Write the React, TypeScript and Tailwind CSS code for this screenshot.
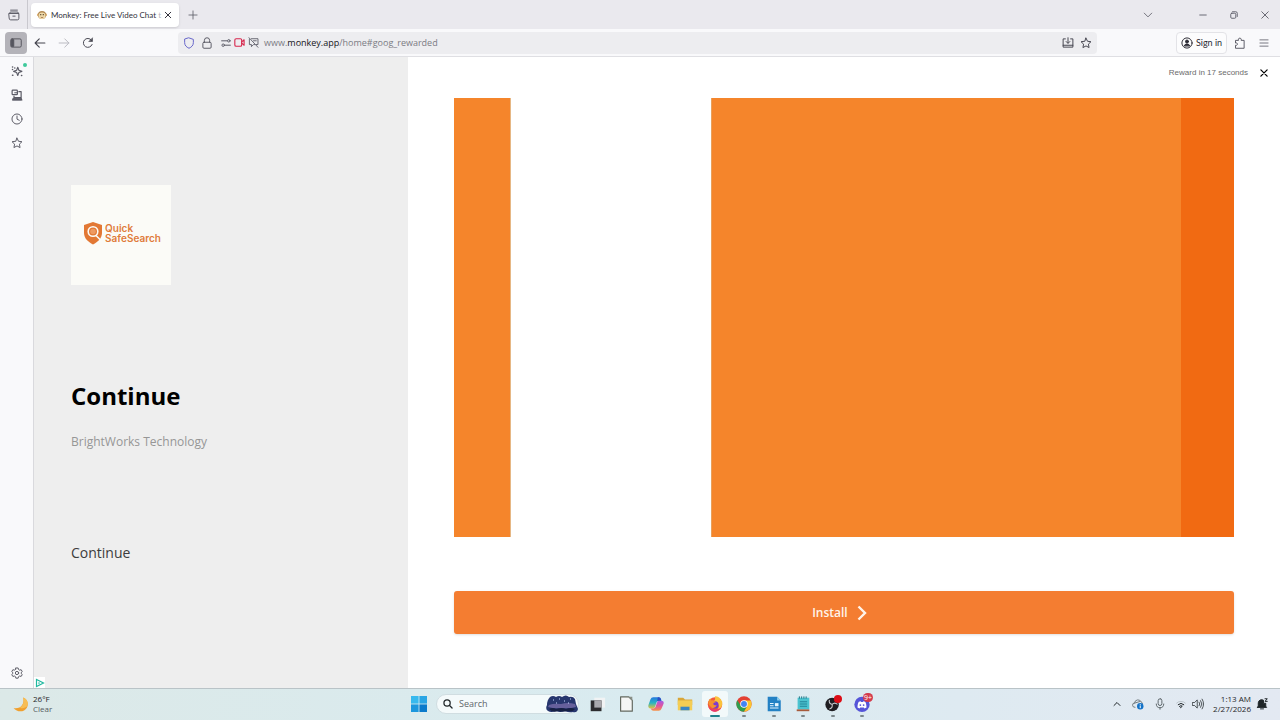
import React from 'react';

interface IconProps {
  className?: string;
  children: React.ReactNode;
}

// Line icon on a 16px grid, stroke follows the text colour
const Icon: React.FC<IconProps> = ({ className = 'size-3', children }) => (
  <svg viewBox="0 0 16 16" className={className} fill="none" stroke="currentColor" strokeWidth="1.3" strokeLinecap="round" strokeLinejoin="round" aria-hidden="true">
    {children}
  </svg>
);

interface IconButtonProps {
  label: string;
  className?: string;
  children: React.ReactNode;
}

const IconButton: React.FC<IconButtonProps> = ({ label, className = 'w-6 h-6', children }) => (
  <button type="button" aria-label={label} className={`flex shrink-0 items-center justify-center ${className}`}>
    {children}
  </button>
);

const STAR = 'M8 1.5l2 4.2 4.6.6-3.4 3.2.9 4.6L8 11.9l-4.1 2.2.9-4.6L1.4 6.3 6 5.7z';

const TabStrip: React.FC = () => (
  <div className="flex h-[29px] items-center bg-[#eae9ee] text-[#5b5b66]">
    <IconButton label="Recent browsing" className="w-7 h-full border-r border-[#c9c8ce]">
      <Icon>
        <path d="M3.500 1.500h9" />
        <path d="M1.500 6h13v6.500a2 2 0 0 1-2 2h-9a2 2 0 0 1-2-2zM2 6l1-2h10l1 2M6.500 9.500h3" />
      </Icon>
    </IconButton>
    <div className="ml-[3px] flex h-6 w-[148px] items-center rounded bg-white pl-1.5 shadow-sm">
      <svg viewBox="0 0 16 16" className="size-2.5 shrink-0" aria-hidden="true">
        <circle cx="2.500" cy="7.500" r="2.500" fill="#d9a45e" />
        <circle cx="13.500" cy="7.500" r="2.500" fill="#d9a45e" />
        <circle cx="8" cy="8" r="6.500" fill="#b48a52" />
        <ellipse cx="8" cy="9" rx="5.500" ry="5.200" fill="#f0dbab" />
        <circle cx="6" cy="7.500" r="1" fill="#3c2b18" />
        <circle cx="10" cy="7.500" r="1" fill="#3c2b18" />
        <path d="M6 11.500q2 1.500 4 0" stroke="#8a4b2a" fill="none" />
      </svg>
      <span className="ml-1 whitespace-nowrap font-['Lato'] text-[8px] leading-4 text-[#33323d]">
        Monkey: Free Live Video Chat <span className="text-[#b5b5ba]">t</span>
      </span>
      <IconButton label="Close tab" className="mr-[5px] ml-auto w-3 h-4 text-[#33323d]">
        <Icon className="size-2"><path d="M2.500 2.500l11 11M13.500 2.500l-11 11" strokeWidth="2" /></Icon>
      </IconButton>
    </div>
    <IconButton label="New tab" className="w-7 h-6">
      <Icon className="size-2.5"><path d="M8 1.500v13M1.500 8h13" /></Icon>
    </IconButton>
    <div className="ml-auto flex">
      <IconButton label="List all tabs" className="mr-[29px] w-5 h-6">
        <Icon className="size-2.5"><path d="M2 5l6 6 6-6" /></Icon>
      </IconButton>
      <IconButton label="Minimize" className="w-[31px] h-6">
        <Icon className="size-2"><path d="M1.500 8h13" strokeWidth="1.800" /></Icon>
      </IconButton>
      <IconButton label="Restore" className="w-[31px] h-6">
        <Icon className="size-2">
          <rect x="1.500" y="4.500" width="10" height="10" rx="2" strokeWidth="1.800" />
          <path d="M5 1.500h6.500a3 3 0 0 1 3 3V11" strokeWidth="1.800" />
        </Icon>
      </IconButton>
      <IconButton label="Close window" className="w-[31px] h-6">
        <Icon className="size-2"><path d="M1.500 1.500l13 13M14.500 1.500l-13 13" strokeWidth="1.800" /></Icon>
      </IconButton>
    </div>
  </div>
);

const Toolbar: React.FC = () => (
  <div className="flex h-7 items-center border-b border-[#dfdfe3] bg-[#f9f9fb] pl-[5px] pr-1 text-[#5b5b66]">
    <IconButton label="Sidebar" className="h-[22px] w-[22px] rounded bg-[#b4b3b9] text-[#55555e]">
      <Icon>
        <rect x="1" y="2.500" width="14" height="11" rx="1.800" />
        <path d="M2.500 3.500h2.500v9H2.500z" fill="currentColor" />
      </Icon>
    </IconButton>
    <IconButton label="Back" className="ml-px w-6 h-6 text-[#45454f]">
      <Icon><path d="M14.500 8h-13M7 2.500L1.500 8 7 13.500" strokeWidth="1.500" /></Icon>
    </IconButton>
    <IconButton label="Forward" className="w-6 h-6 text-[#b9b9c0]">
      <Icon><path d="M1.500 8h13M9 2.500L14.500 8 9 13.500" /></Icon>
    </IconButton>
    <IconButton label="Reload" className="w-6 h-6 text-[#45454f]">
      <Icon>
        <path d="M13.500 10A6 6 0 1 1 12.500 4" />
        <path d="M14 1.500v4.500H9.500z" fill="currentColor" strokeWidth="0.800" />
      </Icon>
    </IconButton>

    <div className="ml-[78px] mr-[79px] flex h-[22px] flex-1 items-center rounded bg-[#ededf0] px-0.5">
      <IconButton label="Tracking protection" className="w-[18px] h-5 text-[#6463c9]">
        <Icon><path d="M8 1.200l5.800 2v4.300c0 3.600-2.300 6-5.800 7.500-3.500-1.500-5.800-3.900-5.800-7.500V3.200z" /></Icon>
      </IconButton>
      <IconButton label="Connection secure" className="w-[18px] h-5">
        <Icon>
          <rect x="2.500" y="7" width="11" height="8" rx="1.500" />
          <path d="M4.500 7V4.500a3.500 3.500 0 0 1 7 0V7" />
        </Icon>
      </IconButton>
      <IconButton label="Permissions" className="ml-[3px] w-3.5 h-5">
        <Icon className="size-2.5">
          <path d="M1 4.500h9M6 11.500h9" strokeWidth="1.600" />
          <circle cx="12.500" cy="4.500" r="2" strokeWidth="1.500" />
          <circle cx="3.500" cy="11.500" r="2" strokeWidth="1.500" />
        </Icon>
      </IconButton>
      <IconButton label="Camera in use" className="w-[13px] h-5 text-[#d7264c]">
        <Icon className="size-[11px]">
          <rect x="1.200" y="2.500" width="10" height="11" rx="2" strokeWidth="1.600" />
          <path d="M11.200 7l3.500-3v8l-3.500-3" strokeWidth="1.600" />
        </Icon>
      </IconButton>
      <IconButton label="Notifications blocked" className="w-3.5 h-5">
        <Icon className="size-[11px]">
          <path d="M5 2.500h9.500V11H12M2 3v8h3v3l3-3h1.500M1.500 1l13 14M8 5.500h4" />
        </Icon>
      </IconButton>
      <div className="relative ml-1 flex-1 text-[9px] leading-5 text-[#7b7b83]">
        <span>www.</span><span className="font-medium text-[#15141a]">monkey.app</span><span>/home#goog_rewarded</span>
        <input type="text" aria-label="Address" className="absolute inset-0 w-full opacity-0" />
      </div>
      <IconButton label="Install app" className="w-[18px] h-5 text-[#45454f]">
        <Icon><path d="M4.500 2.500H1.500v11h13v-11h-3M1.500 11h13M8 1v7M5.500 6L8 8.500 10.500 6" /></Icon>
      </IconButton>
      <IconButton label="Bookmark" className="w-[18px] h-5 text-[#45454f]">
        <Icon><path d={STAR} /></Icon>
      </IconButton>
    </div>

    <button type="button" className="flex h-[22px] w-[51px] items-center justify-center gap-[3px] rounded border border-[#e3e3e7] bg-[#fcfcfd] font-['Lato'] text-[9px] text-[#2b2a33]">
      <Icon>
        <circle cx="8" cy="8" r="6.800" />
        <circle cx="8" cy="6" r="2" fill="currentColor" />
        <path d="M4.500 11.500c0-3 7-3 7 0z" fill="currentColor" />
      </Icon>
      <span className="whitespace-nowrap">Sign in</span>
    </button>
    <IconButton label="Extensions" className="ml-px w-6 h-6">
      <Icon><path d="M2 14.500v-3.500c3.500 1 3.500-4 0-3V4.500h4c-1.500-4 5-4 3.500 0h4v10z" /></Icon>
    </IconButton>
    <IconButton label="Menu" className="w-6 h-6">
      <Icon className="size-2.5"><path d="M1.500 3h13M1.500 8h13M1.500 13h13" /></Icon>
    </IconButton>
  </div>
);

const Sidebar: React.FC = () => (
  <nav aria-label="Sidebar" className="flex w-[33px] shrink-0 flex-col items-center bg-[#f9f9fb] pt-0.5 pb-[3px] text-[#5b5b66]">
    <div className="relative">
      <IconButton label="AI chatbot">
        <Icon>
          <path d="M9 3l1.500 4L14.500 8.500l-4 1.500L9 14l-1.500-4L3.500 8.500l4-1.500z" strokeWidth="1.500" />
          <path d="M2 2.500h.2M5 4h.1M2 6h.1M2 13.500h.5M14 14h.3" strokeWidth="2" />
        </Icon>
      </IconButton>
      <span className="absolute top-1 right-0.5 size-1 rounded-full bg-[#3fc99b]" />
    </div>
    <IconButton label="Synced tabs">
      <Icon>
        <rect x="1.500" y="1.500" width="7" height="6" rx="1" strokeWidth="1.600" />
        <path d="M10.500 3.500h3v8H4v-2M2 14.500h12.500M8.500 5H5" strokeWidth="1.600" />
        <path d="M3 12.500h11v2H3z" fill="currentColor" />
      </Icon>
    </IconButton>
    <IconButton label="History">
      <Icon><circle cx="8" cy="8" r="6.700" /><path d="M8 4v4.200l3 1.500" /></Icon>
    </IconButton>
    <IconButton label="Bookmarks">
      <Icon><path d={STAR} /></Icon>
    </IconButton>
    <IconButton label="Customize sidebar" className="mt-auto w-6 h-6">
      <Icon>
        <path d="M6.500 1.300h3l.5 2 1.500.9 2-.6 1.500 2.600-1.500 1.400v1l1.500 1.400-1.500 2.600-2-.6-1.500.9-.5 2h-3l-.5-2-1.500-.9-2 .6L1 10l1.500-1.400v-1L1 6.200l1.500-2.600 2 .6L6 3.300z" />
        <circle cx="8" cy="8" r="2.200" />
      </Icon>
    </IconButton>
  </nav>
);

const AdInfo: React.FC = () => (
  <section className="relative flex w-[30%] shrink-0 flex-col items-start justify-center bg-[#eeeeee] pt-1 pl-[37px]">
    <div className="flex size-[100px] items-center justify-center gap-0.5 bg-[#fbfbf7] pb-1 pl-0.5">
      <svg viewBox="0 0 20 24" className="h-6 w-5" aria-hidden="true">
        <path d="M10 1l9 3v8c0 5-4 9-9 11.500C5 21 1 17 1 12V4z" fill="#e27834" />
        <circle cx="10" cy="10.500" r="4.800" fill="none" stroke="#fbfbf7" strokeWidth="1.600" />
        <path d="M13 14.500l4.500 4.500" stroke="#fbfbf7" strokeWidth="1.600" />
        <circle cx="10" cy="10.500" r="2.800" fill="#ee9a61" />
      </svg>
      <div className="font-['Inter'] text-[10px] leading-[10px] font-semibold text-[#e07b3b]">
        Quick<br />SafeSearch
      </div>
    </div>
    <h1 className="mt-[95px] text-2xl leading-8 font-bold text-black">Continue</h1>
    <p className="mt-5 text-xs leading-5 text-[#969696]">BrightWorks Technology</p>
    <p className="mt-[89px] text-sm leading-6 text-[#3c3c3c]">Continue</p>
    <a href="#adchoices" aria-label="AdChoices" className="absolute bottom-0 left-0 flex size-[11px] items-center justify-center bg-white">
      <svg viewBox="0 0 10 10" className="size-2.5" fill="none" stroke="#21b8a0" aria-hidden="true">
        <path d="M1.500 1.500v7L8.500 5z" strokeWidth="1.200" />
        <path d="M4 4.200v2" />
      </svg>
    </a>
  </section>
);

const AdMedia: React.FC = () => (
  <section className="flex flex-1 flex-col bg-white px-[46px] pb-[54px]">
    <div className="-mr-[46px] flex h-8 items-center justify-end pr-1 font-['Liberation_Sans'] text-[8px] text-[#6b6b6b]">
      <span>Reward in 17 seconds</span>
      <IconButton label="Close ad" className="ml-1 w-6 h-6 text-black">
        <Icon className="size-2.5"><path d="M3 3l10 10M13 3L3 13" strokeWidth="2" /></Icon>
      </IconButton>
    </div>
    <div className="mt-[9px] flex flex-1">
      <div className="flex-[56] border-r border-[#e6b784] bg-[#f5852b]" />
      <div className="flex-[200] bg-white" />
      <div className="flex-[470] border-l border-[#e9a05c] bg-[#f5852b]" />
      <div className="flex-[53] bg-[#f16a12]" />
    </div>
    <button type="button" className="mt-[54px] flex h-[43px] w-full items-center justify-center gap-2 rounded-[3px] bg-[#f47d31] pr-2 text-xs font-semibold text-[#fff4ea] shadow">
      Install
      <svg viewBox="0 0 12 16" className="h-4 w-3" fill="none" stroke="currentColor" strokeWidth="2.400" aria-hidden="true">
        <path d="M2.500 1.500L9 8l-6.500 6.500" />
      </svg>
    </button>
  </section>
);

interface TaskApp {
  name: string;
  running?: boolean;
  active?: boolean;
  badge?: string;
  art: React.ReactNode;
}

const taskApps: TaskApp[] = [
  {
    name: 'Task view',
    art: (
      <>
        <path d="M7 3h12v11H7z" fill="#f1f3f4" />
        <path d="M3 6h12v12H3z" fill="#2c2c2e" />
        <path d="M7 6h8v8H7z" fill="#a9a9ad" />
      </>
    ),
  },
  {
    name: 'LibreOffice',
    art: (
      <>
        <path d="M4 2h9l4 4v12H4z" fill="#f5f6f5" stroke="#62685f" strokeWidth="1.300" strokeLinejoin="round" />
        <path d="M13 2h4v4z" fill="#8b9088" />
      </>
    ),
  },
  {
    name: 'Copilot',
    art: (
      <>
        <defs>
          <linearGradient id="copilotLeft" x1="0" y1="0" x2="0" y2="1">
            <stop offset="0" stopColor="#2478e0" />
            <stop offset="0.500" stopColor="#28b4c4" />
            <stop offset="1" stopColor="#e6c33a" />
          </linearGradient>
          <linearGradient id="copilotRight" x1="0" y1="0" x2="0" y2="1">
            <stop offset="0" stopColor="#a45be6" />
            <stop offset="0.500" stopColor="#e0559f" />
            <stop offset="1" stopColor="#f6934a" />
          </linearGradient>
        </defs>
        <path d="M7 2.500h6q2 0 2.500 2l.5 2h-3q-2 0-2.600 2L9 13q-.6 2-2.500 2H4q-3 0-2.500-3.500L3.800 5Q4.700 2.500 7 2.500z" fill="url(#copilotLeft)" />
        <path d="M13 17.500H7q-2 0-2.500-2L4 15h3q2 0 2.600-2L11 8.500q.6-2 2.500-2H16q3 0 2.500 3L16.200 15q-.9 2.500-3.200 2.500z" fill="url(#copilotRight)" />
        <path d="M12 2.500h1q2 0 2.500 2l.5 2h-3q-1 0-1.800.6z" fill="#2b4fc4" />
      </>
    ),
  },
  {
    name: 'File Explorer',
    art: (
      <>
        <path d="M2 3h6l2 2h8v6H2z" fill="#d9a638" />
        <path d="M2 6h16v11H2z" fill="#f4cd54" />
        <path d="M5 13h10v4H5z" fill="#3a86c4" />
      </>
    ),
  },
  {
    name: 'Firefox',
    running: true,
    active: true,
    art: (
      <>
        <circle cx="10" cy="10.500" r="8" fill="#f2593c" />
        <path d="M10 1.500q5 0 8 6c.500 5-2 10-7 11 6-6 3-10-3-11 3-2 2-4 2-6z" fill="#fbc23c" />
        <circle cx="10" cy="11" r="4" fill="#7c3ad0" />
        <path d="M2.500 9C3 5 5 4 5 4l1 2q3-1 5 2-3 0-3 2 1 2 4 1-2 5-6 3-3-2-3.500-5z" fill="#f5922f" />
        <path d="M2.500 13q3 6 8 5.500 5-1 6.500-4.500-5 3-8.500 2-4-.5-6-3z" fill="#e73970" />
      </>
    ),
  },
  {
    name: 'Chrome',
    running: true,
    art: (
      <>
        <circle cx="10" cy="10" r="8.500" fill="#e34133" />
        <path d="M2.600 5.800A8.500 8.500 0 0 0 10 18.500L13.700 12 10 14l-3.500-2z" fill="#2f9e4f" />
        <path d="M10 18.500A8.500 8.500 0 0 0 17.400 6H10l4 4-.5 2.500z" fill="#fbc62e" />
        <circle cx="10" cy="10" r="4.200" fill="#fff" />
        <circle cx="10" cy="10" r="3.300" fill="#4285f4" />
      </>
    ),
  },
  {
    name: 'Writer',
    running: true,
    art: (
      <>
        <path d="M3 2h10.500l4 4v12H3z" fill="#2381c4" />
        <path d="M13.500 2l4 4h-4z" fill="#8fd0f0" />
        <path d="M5.500 9.500h4M5.500 12h4M5.500 14.500h9.500" stroke="#e5f5ff" strokeWidth="1.200" />
        <path d="M11 9h4v3.500h-4z" fill="#e5f5ff" />
      </>
    ),
  },
  {
    name: 'Notepad',
    running: true,
    art: (
      <>
        <path d="M4 3h13v13H4z" fill="#4cc3d0" />
        <path d="M3 16h14v2H3z" fill="#a75a3b" />
        <path d="M6 1.500v2.500M8.500 1.500v2.500M11 1.500v2.500M13.500 1.500v2.500" stroke="#176b7d" />
        <path d="M6.500 7.500h8M6.500 10h8M6.500 12.500h8" stroke="#1e7e93" />
      </>
    ),
  },
  {
    name: 'OBS Studio',
    running: true,
    art: (
      <>
        <circle cx="9" cy="10.500" r="7.500" fill="#1f1e22" />
        <path d="M9 10.500q-4-1-3-5M9 10.500q3-3 6 0M9 10.500q1 4-3 5" stroke="#c8c8cc" strokeWidth="1.200" fill="none" />
        <circle cx="15.500" cy="4.500" r="4.500" fill="#dc0d16" />
      </>
    ),
  },
  {
    name: 'Discord',
    running: true,
    badge: '9+',
    art: (
      <>
        <circle cx="10" cy="10.500" r="8.500" fill="#5555d8" />
        <path d="M5 14c0-3 .8-6 1.500-6.500l2-.5.5.8h2l.5-.8 2 .5C14.200 8 15 11 15 14l-2.200 1-.8-1.200H8L7.200 15z" fill="#fff" />
        <circle cx="8.200" cy="11.200" r="1" fill="#5555d8" />
        <circle cx="11.800" cy="11.200" r="1" fill="#5555d8" />
      </>
    ),
  },
];

const Taskbar: React.FC = () => (
  <footer className="grid h-8 grid-cols-[1fr_auto_1fr] items-center border-t border-[#b9c3c7] bg-linear-to-r from-[#dce9e8] via-[#d9ebf0] to-[#e3e9f2] pb-px text-[#1f2528]">
    <button type="button" className="flex items-center gap-1 justify-self-start pl-3 text-left text-[8px] leading-[10px]">
      <svg viewBox="0 0 16 16" className="size-[17px]" aria-hidden="true">
        <path d="M10.500 1.500c4 1.500 5.500 6 3.500 9.500-2.500 4.500-9 4.500-12.500.5 7 1 10.500-4 9-10z" fill="#f0a02f" />
        <path d="M10.500 1.500c4 1.500 5 5 4 8-2 2-5 2.500-7 1.500 3-2 4-5 3-9.500z" fill="#f7be55" />
      </svg>
      <span>
        <span className="block font-medium">26°F</span>
        <span className="block text-[#555c60]">Clear</span>
      </span>
    </button>

    <div className="flex h-full w-[470px] items-center">
      <IconButton label="Start" className="ml-[3px] w-[22px] h-6">
        <svg viewBox="0 0 16 16" className="size-4" aria-hidden="true">
          <path d="M0 0h7.600v7.600H0z" fill="#37b9ee" />
          <path d="M8.400 0H16v7.600H8.400z" fill="#2aa5e4" />
          <path d="M0 8.400h7.600V16H0z" fill="#1c97dd" />
          <path d="M8.400 8.400H16V16H8.400z" fill="#0b7acb" />
        </svg>
      </IconButton>
      <label className="ml-1.5 flex h-5 w-[143px] items-center rounded-full border border-[#d0dde1] bg-[#f4fafb] pl-1.5">
        <Icon className="size-2.5 shrink-0"><circle cx="6.500" cy="6.500" r="5" strokeWidth="2" /><path d="M10.500 10.500l4 4" strokeWidth="2" /></Icon>
        <input type="search" aria-label="Search" placeholder="Search" className="ml-1.5 w-full min-w-0 bg-transparent text-[9px] placeholder:text-[#5f676b]" />
        <svg viewBox="0 0 32 18" className="h-[18px] w-8 shrink-0" aria-hidden="true">
          <path d="M4 2q3-2 6 0 3-2 6 0 4-3 7 0 4-1 6 2l1 5 2 5q-1 4-5 3-4 1-8-1-5 2-9 0-5 2-8 0-3-2-1-6 0-5 3-8z" fill="#27366e" />
          <path d="M3 10q5-2 12-1 7-2 14 0l1 3q-7 2-14 1-7 1-14-1z" fill="#66609c" />
          <path d="M3 14q4-2 7 0 6-2 10 0 5-2 9 0-2 3-7 2-6 1-10 0-5 2-9-2z" fill="#172044" />
          <path d="M7 5h1M13 4h1M18 6h1M24 4h1M10 8h1M22 8h1" stroke="#c6d8ff" />
        </svg>
      </label>
      <div className="ml-[5px] flex h-full flex-1 items-center justify-between">
        {taskApps.map((app) => (
          <button
            key={app.name}
            type="button"
            aria-label={app.name}
            className={`relative flex h-[26px] w-[26px] items-center justify-center rounded-[3px] ${app.active ? 'bg-[#f2f9fa]' : ''}`}
          >
            <svg viewBox="0 0 20 20" className="size-[18px]" aria-hidden="true">{app.art}</svg>
            {app.badge && (
              <span className="absolute top-0.5 right-0.5 rounded-full bg-[#d43b4d] px-px text-[7px] leading-[9px] text-white">{app.badge}</span>
            )}
            {app.running && (
              <span className={`absolute bottom-0 h-0.5 rounded-full ${app.active ? 'w-2.5 bg-[#20808c]' : 'w-1 bg-[#7d888c]'}`} />
            )}
          </button>
        ))}
      </div>
    </div>

    <div className="flex items-center justify-self-end pr-2.5">
      <IconButton label="Show hidden icons" className="w-5 h-6">
        <Icon className="size-2"><path d="M2 11l6-6 6 6" strokeWidth="2" /></Icon>
      </IconButton>
      <IconButton label="OneDrive" className="w-[22px] h-6">
        <Icon>
          <path d="M4 12.500a3 3 0 0 1-.5-6 4.500 4.500 0 0 1 8.500-1.500 3 3 0 0 1 2 3" stroke="#70797d" />
          <path d="M3 7l8-2.500" stroke="#70797d" />
          <circle cx="11" cy="11" r="4.300" fill="#1473c8" stroke="none" />
          <path d="M11 10.500v2.500M11 8.800v.1" stroke="#fff" />
        </Icon>
      </IconButton>
      <IconButton label="Microphone" className="w-[22px] h-6 text-[#5b6569]">
        <Icon>
          <rect x="5.500" y="1" width="5" height="9" rx="2.500" />
          <path d="M3 8a5 5 0 0 0 10 0M8 13v2" />
        </Icon>
      </IconButton>
      <IconButton label="Network" className="w-5 h-6">
        <Icon className="size-2.5">
          <path d="M1 6.500a10 10 0 0 1 14 0" stroke="#b3bdc1" />
          <path d="M3.500 9a6.500 6.500 0 0 1 9 0M6 11.500a3 3 0 0 1 4 0L8 13.500z" strokeWidth="1.600" />
        </Icon>
      </IconButton>
      <IconButton label="Volume" className="w-3.5 h-6">
        <Icon><path d="M1 6h2.500L7 2.500v11L3.500 10H1zM9.500 5.500q2 2.500 0 5M11.500 3.500q3.500 4.500 0 9M13.500 1.500q4 6.500 0 13" strokeWidth="1" /></Icon>
      </IconButton>
      <button type="button" className="ml-2 text-right text-[8px] leading-[10px]">
        <span className="block">1:13 AM</span>
        <span className="block">2/27/2026</span>
      </button>
      <IconButton label="Notifications" className="ml-[3px] w-4 h-6">
        <Icon>
          <path d="M3 11V6.500a4.500 4.500 0 0 1 7-3.500v4h3v4l1.200 1.500H1.800zM6 14.500h4" fill="currentColor" />
          <path d="M12 1h3l-3 3.500h3" />
        </Icon>
      </IconButton>
    </div>
  </footer>
);

const App: React.FC = () => {
  return (
    <div className="flex min-h-screen flex-col font-['Open_Sans',sans-serif]">
      <header>
        <TabStrip />
        <Toolbar />
      </header>
      <div className="flex flex-1">
        <Sidebar />
        <main className="flex flex-1 border-l border-[#d9d9dd]">
          <AdInfo />
          <AdMedia />
        </main>
      </div>
      <Taskbar />
    </div>
  );
};

export default App;
